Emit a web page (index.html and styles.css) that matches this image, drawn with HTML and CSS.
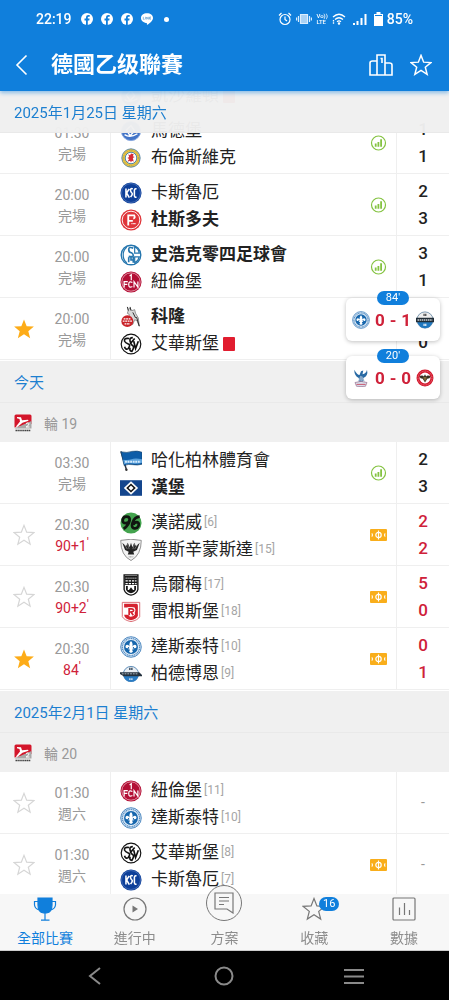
FILE: index.html
```html
<!DOCTYPE html>
<html lang="zh-Hant">
<head>
<meta charset="utf-8">
<meta name="viewport" content="width=device-width, initial-scale=1">
<title>德國乙级聯賽</title>
<link rel="stylesheet" href="styles.css">
</head>
<body>
<svg class="sprite" aria-hidden="true">
  <symbol id="star" viewBox="0 0 24 24"><path d="M12 1.5l2.900 7.400 7.900.5-6.100 5 2 7.700L12 17.800l-6.700 4.300 2-7.700-6.100-5 7.900-.5z"/></symbol>
  <symbol id="stats" viewBox="0 0 16 16"><circle cx="8" cy="8" r="7" fill="none" stroke="#84c341" stroke-width="1.200"/><path d="M4.300 8.500h1.800v3.300H4.300zM7 7h1.800v4.800H7zM9.700 4.300h1.800v7.500H9.700z" fill="#84c341"/></symbol>
  <symbol id="pitch" viewBox="0 0 17 12"><rect width="17" height="12" rx="1" fill="#f9ae1b"/><path d="M8.500 1.500v9M1.800 4.300Q3.300 6 1.800 7.700M15.200 4.300Q13.700 6 15.200 7.700" fill="none" stroke="#fff" stroke-width="1.100"/><ellipse cx="8.500" cy="6" rx="2.700" ry="2.700" fill="none" stroke="#fff" stroke-width="1.200"/></symbol>
  <symbol id="fb" viewBox="0 0 12 12"><circle cx="6" cy="6" r="6" fill="#fff"/><path d="M5 12V7.400H3.500V5.600H5V4.500c0-1.700 1-2.500 2.500-2.500l1.200.1v1.600H7.800c-.8 0-1 .4-1 1v.9h1.800l-.3 1.800H6.800V12z" fill="#107fdc"/></symbol>
  <symbol id="league" viewBox="0 0 18 18"><path d="M2 .5h14q1.500 0 1.500 1.500v8L.5 13.500V2Q.5.500 2 .5z" fill="#d3162b"/><path d="M.5 14.500L17.500 7v7.500z" fill="#a9a9a9"/><path d="M3 3l4 .3 1 3 6-.6.500 1-6 2-5.500 4.500-1-.7L6 7.500 5.500 5 3 4.300z" fill="#fff"/><path d="M12 9.500q3-1.500 3 .3T12 13h3.500" fill="none" stroke="#fff"/><path d="M1.500 16.500h15" stroke="#444" stroke-width="1.500" stroke-dasharray="1.500 .4"/></symbol>
  <symbol id="fcm" viewBox="0 0 24 24"><circle cx="12" cy="12" r="10.500" fill="#4274c7" stroke="#89a8df"/><path d="M5 16q6 4 14-1M7 11l5-5 4 6-5 5z" fill="none" stroke="#fff" stroke-width="1.500"/></symbol>
  <symbol id="ebs" viewBox="0 0 24 24"><circle cx="12" cy="12" r="10" fill="#edc440" stroke="#5484a8"/><circle cx="12" cy="12" r="8.200" fill="none" stroke="#7d8f60" stroke-width=".7" stroke-dasharray="1 1"/><circle cx="12" cy="12" r="6.300" fill="#fff" stroke="#397db2"/><path d="M9 8l2 1 1-2 3 1-1 2 2 1-2 1 1 4-2-1-1 2-1-2-3 1 2-3-2-1 2-1z" fill="#d72a34"/></symbol>
  <symbol id="ksc" viewBox="0 0 24 24"><circle cx="12" cy="12" r="11.500" fill="#0d3f99"/><circle cx="12" cy="12" r="10.300" fill="none" stroke="#7d9bd2" stroke-width=".5"/><path d="M6.500 7v10M10 7.500L7.200 12l3 5M14 7.500q-3-1-2.500 2 .2 1.500 1.500 2.500t-1.500 4.500M18 7.500q-2-.5-2.300 1.500v6q.2 2 2.300 1.500" stroke="#fff" stroke-width="1.700" fill="none"/></symbol>
  <symbol id="f95" viewBox="0 0 24 24"><circle cx="12" cy="12" r="11.500" fill="#df353a"/><circle cx="12" cy="12" r="9.600" fill="none" stroke="#fff" stroke-width="1"/><path d="M9 18V7h6.500q1.500 3-1 3.500M9 13h5" stroke="#fff" stroke-width="2" fill="none"/><path d="M12.500 16h5" stroke="#fff" stroke-width="1.500" stroke-dasharray="1 .5"/></symbol>
  <symbol id="s04" viewBox="0 0 24 24"><circle cx="12" cy="12" r="10.700" fill="#fff" stroke="#2576ae" stroke-width="1.500"/><path d="M7.500 3.500Q3.500 6 3.500 12t4 8.500M16 3q4.500 2.500 5 7h-5zM16 14h5q-1 4.500-5 6.500z" fill="none" stroke="#2576ae" stroke-width="1.300"/><path d="M14.500 4.500q-5-2-5 1.500t3 3.500q2 1 2 3t-5 1M9.500 14.500V20M12 14.500v3h3M14.500 14v6.500" fill="none" stroke="#2576ae" stroke-width="1.800"/></symbol>
  <symbol id="fcn" viewBox="0 0 24 24"><circle cx="12" cy="12" r="11.500" fill="#b30f35"/><circle cx="12" cy="12" r="10" fill="none" stroke="#efb9c5" stroke-width=".8"/><path d="M10.500 5.500L12.300 4v6M4.500 18v-6.500h4M4.500 14.500h3.500M13.500 12.500q-4-2-4 2.200t4 2.200M15.300 18v-6.500l4.200 6v-6" fill="none" stroke="#fff" stroke-width="1.300"/></symbol>
  <symbol id="koe" viewBox="0 0 24 24"><path d="M10 2l3 3 3-1 1 4 3 5 1 9-2.500-6-2.500-1-2 5-4 1V9L8 8z" fill="#d8d8d8" stroke="#666" stroke-width=".7"/><path d="M9 5l-1-4M12 5l-1-4M18 12l3 10M14 7l3 6" stroke="#222"/><circle cx="8" cy="16.500" r="6.500" fill="#c92329"/><path d="M3 16.500h10M4 14h8M5 19.500h6" stroke="#fff" stroke-width="1.200" stroke-dasharray="2 .7"/></symbol>
  <symbol id="elv" viewBox="0 0 24 24"><circle cx="12" cy="12" r="10.700" fill="#fff" stroke="#111" stroke-width="1.300"/><path d="M10 6q-6-1-5 3 1 2 4 3t0 5q-3 2-4-2M14 5q-4 0-3 4t3 5-1 6q-3 0-2-4M11 12l5-6M15 9l2 8 3-8" fill="none" stroke="#111" stroke-width="1.800"/></symbol>
  <symbol id="bsc" viewBox="0 0 24 24"><path d="M1 1.500l6 20" stroke="#2d3746" stroke-width="1.600"/><path d="M1 2q7 1.500 12-.5 6-1 11 1v13q-5 1.500-10 .5t-9.500 1z" fill="#0e5da8" stroke="#17436b" stroke-width=".7"/><path d="M3.500 10.500q5 1 9-.5t11.500 0v4q-5 1.500-10 .7t-9.500.8z" fill="#5ba2dd"/><path d="M5.500 12.800h17" stroke="#d8ecfb" stroke-width="2" stroke-dasharray="2 .8"/><circle cx="7" cy="21.500" r="1.300" fill="#333"/></symbol>
  <symbol id="hsv" viewBox="0 0 24 24"><path d="M0 3.500h24v17H0z" fill="#14468d"/><path d="M12 4.700l7.800 7.300-7.800 7.300L4.200 12z" fill="#fff"/><path d="M12 7.200l5.200 4.800-5.200 4.800L6.800 12z" fill="#111"/><path d="M12 9.400l2.800 2.600-2.800 2.600L9.200 12z" fill="#fff"/></symbol>
  <symbol id="h96" viewBox="0 0 24 24"><circle cx="12" cy="12" r="11.500" fill="#43a34e"/><path d="M10.500 8.200q0 4-4.300 4-3.500 0-3.200-3.700Q3.500 5 7 5q4 0 3.500 4-.7 5-6.500 9.500M21.500 5Q16 5.500 14 11q-2 5 .5 6.500 3.500 1.500 5.500-2 1.500-4-1.500-4.500-3 0-4 3" fill="none" stroke="#101510" stroke-width="3"/></symbol>
  <symbol id="scp" viewBox="0 0 24 24"><path d="M.8 1.500q11-2.500 22.400 0 0 16-11.200 22Q.8 18 .8 1.500z" fill="#f4f4f4" stroke="#888"/><path d="M2.500 4l3 8 4 2-1 3h7l-1-3 4-2 3-8-4 4-2-4-2 5-1.500-5-1.500 5-2-5-2 4z" fill="#252525"/><path d="M5 6l3 5M8 5l2 6M19 6l-3 5M16 5l-2 6" stroke="#aaa" stroke-width=".6"/><path d="M9.500 19.500h5" stroke="#888" stroke-dasharray="1 .5"/></symbol>
  <symbol id="ulm" viewBox="0 0 24 24"><path d="M4.500 1h15v16q-1.500 5-7.500 6-6-1-7.500-6z" fill="#fff" stroke="#171717" stroke-width="1.500"/><path d="M5 2h14v10H5z" fill="#171717"/><path d="M6 4.500h12" stroke="#ddd" stroke-dasharray="1.500 .6"/><path d="M6 7.500h12M6 10.500h12" stroke="#fff" stroke-width="1.300" stroke-dasharray="2.500 1"/><path d="M6.500 13v4q1.500 3.500 5.500 4 4-.5 5.500-4v-4h-2v4.500h-1.300l-2.200-3-2.200 3H8.500V13z" fill="#171717"/></symbol>
  <symbol id="ssv" viewBox="0 0 24 24"><path d="M2.500 1.500h19V17q-2 4-9.500 5.500Q4.500 21 2.500 17z" fill="#fff" stroke="#d9646c"/><path d="M4.500 3h13.500q1.500 0 1.500 2v11q-1 3.500-7.500 5-7-1.500-7.500-6H9q1 2.500 3 2.200 4-.7 4-3V7H4.500z" fill="#d5222f"/><path d="M10 15V8.500h2.500q3 .2 2.500 2-.5 1.500-4 1.500M12 12l3 3.500" fill="none" stroke="#fff" stroke-width="3.600"/><path d="M10 15.500V8.500h2.500q2.500.2 2.300 2-.3 1.500-4 1.500M12 12l2.500 3.500" fill="none" stroke="#d5222f" stroke-width="1.900"/></symbol>
  <symbol id="d98" viewBox="0 0 24 24"><circle cx="12" cy="12" r="11.200" fill="#e5eff8" stroke="#3f7fbb"/><circle cx="12" cy="12" r="9.400" fill="none" stroke="#5a91c5" stroke-width="1.500" stroke-dasharray="1.400 .6"/><circle cx="12" cy="12" r="7.600" fill="#1767ad"/><path d="M12 5.500c2.200 2.300 2.200 4.500.9 7 .9-2.600 3.800-4 4.900-2 .9 2-.8 3.300-2.500 2.600.4-1.500-1.300-1.200-1.500.4h1v1.200h-1.700l1 2.500L12 18.500l-2.100-1.300 1-2.500H9.200v-1.200h1c-.2-1.600-1.900-1.900-1.500-.4-1.700.7-3.400-.6-2.500-2.600 1.100-2 4-.6 4.900 2-1.300-2.500-1.300-4.700.9-7z" fill="#fff"/></symbol>
  <symbol id="p07" viewBox="0 0 24 24"><circle cx="12" cy="12" r="8.300" fill="#e9eef3" stroke="#5587b3"/><path d="M3.700 13.500h16.600q-1.500 7-8.300 7t-8.300-7z" fill="#2a7cc4"/><path d="M0 10h21l3 3v1.500H4L0 12z" fill="#24313e"/><path d="M2 11.800h17" stroke="#b5bcc4" stroke-dasharray="2 1"/><path d="M10 6.500h4" stroke="#345" stroke-width="2.500" stroke-dasharray="1.500 .7"/><path d="M10 17.500h4" stroke="#cfe3f5" stroke-width="2" stroke-dasharray="1.500 .7"/></symbol>
  <symbol id="p07-wide" viewBox="0 0 24 24"><circle cx="12" cy="12" r="10.800" fill="#eee" stroke="#557b9b"/><path d="M1.500 14h21Q20 23 12 23T1.500 14z" fill="#2078bf"/><path d="M0 9h24v6H0z" fill="#202d37"/><path d="M2 12h20" stroke="#c9ced2" stroke-width="2" stroke-dasharray="2 .8"/><path d="M10 5h4" stroke="#333" stroke-width="3" stroke-dasharray="1.500 .8"/><path d="M10 18.500h4" stroke="#fff" stroke-width="3" stroke-dasharray="1.500 .8"/></symbol>
  <symbol id="cpfc" viewBox="0 0 24 24"><path d="M3 1q4 7 7 7l2-5 3-1-1 5q5-1 6-6 2 8-5 11l-1 6h-4l-1-6Q3 9 3 1z" fill="#286aa4"/><path d="M11 9l3 1 3 7-3-2-2 3-1-3-3 2z" fill="#89a9c8"/><path d="M4 18q8-3 16 0l-2 5q-6 1-12 0z" fill="#d9dfeb" stroke="#8a5a7d" stroke-width=".8"/><path d="M6 20.500h12" stroke="#c62844"/></symbol>
  <symbol id="bre" viewBox="0 0 24 24"><circle cx="12" cy="12" r="11.300" fill="#d3162b"/><circle cx="12" cy="12" r="9.300" fill="none" stroke="#f2a5ac" stroke-width=".8" stroke-dasharray="1.500 .8"/><circle cx="12" cy="12" r="7.300" fill="#fff"/><path d="M4.500 10q4-3 6 0L12 7l1.500 3q2-3 6 0-1 3-4.500 3l-3 5-3-5q-3.500 0-4.500-3z" fill="#373021"/><path d="M10 12h4M11 14.500h2" stroke="#d8ae55" stroke-width="1.200"/></symbol>
</svg>

<header class="top">
  <div class="status">
    <span>22:19</span>
    <span class="status-apps">
      <svg class="app"><use href="#fb"/></svg>
      <svg class="app"><use href="#fb"/></svg>
      <svg class="app"><use href="#fb"/></svg>
      <svg class="app" viewBox="0 0 12 12"><path d="M6 .3c3.400 0 6 2 6 4.700 0 2.800-3.500 5.400-5.600 6.800-.6.300-.6-.5-.5-1.700C2.600 9.900 0 7.700 0 5 0 2.300 2.600.3 6 .3z" fill="#fff"/><path d="M2.300 3.800v2.500h1.300M4.600 3.800v2.500M5.700 6.500V4l1.600 2.300V3.800M10 4H8.600v2.200H10M8.600 5.100h1.200" fill="none" stroke="#4a90c8" stroke-width=".6"/></svg>
      <i class="dot"></i>
    </span>
    <span class="status-system">
      <svg width="14" height="14" viewBox="0 0 14 14" fill="none" stroke="#fff" stroke-width="1.200"><circle cx="7" cy="7.500" r="5"/><path d="M7 4.500v3l2 1.500M1 3.500L3.500 1M13 3.500L10.500 1"/></svg>
      <svg width="16" height="12" viewBox="0 0 16 12" fill="none" stroke="#d9edff" stroke-width="1.200"><path d="M4.500 1.500h7v9h-7z" fill="#a9d1f4"/><path d="M2.500 3v6M13.500 3v6M.6 4.500v3M15.400 4.500v3"/></svg>
      <span class="volte"><span>Vo))</span><span>LTE</span></span>
      <svg width="14" height="12" viewBox="0 0 14 12" fill="none" stroke="#fff" stroke-width="1.300"><path d="M1 4q6-5.500 12 0M3 6.500q4-3.500 8 0M5 8.700q2-1.500 4 0"/><circle cx="7" cy="10.500" r=".6" fill="#fff"/><path d="M1.500 7v4" stroke-dasharray="1.500 .8"/></svg>
      <svg class="signal" width="14" height="12" viewBox="0 0 14 12" fill="none" stroke="#fff" stroke-width="2"><path d="M1 10v2M4.500 8v4M8.500 5v7M12.500 1v11"/></svg>
      <svg width="9" height="14" viewBox="0 0 9 14"><path d="M2.500 0h4v2H9v12H0V2h2.500z" fill="#fff"/><path d="M1 3.500h7" stroke="#107fdc" stroke-width="1"/></svg>
      <span>85%</span>
    </span>
  </div>
  <div class="title-bar">
    <button class="bar-btn" aria-label="返回"><svg width="22" height="22" viewBox="0 0 22 22"><path d="M14.500 1.500L5 11l9.500 9.500"/></svg></button>
    <h1>德國乙级聯賽</h1>
    <button class="bar-btn" aria-label="積分榜"><svg width="24" height="22" viewBox="0 0 24 22"><path d="M8 21V1h8v20M8 7H3.500Q1 7 1 9v12h22V11q0-2-2.500-2H16M11.500 4.500H13V9"/></svg></button>
    <button class="bar-btn" aria-label="收藏聯賽"><svg width="22" height="22" viewBox="0 0 24 24"><use href="#star"/></svg></button>
  </div>
</header>

<main class="schedule">
  <h2 class="date date-pinned">2025年1月25日 星期六</h2>
  <ul class="matches matches-scrolled">
    <li class="match">
      <span class="fav"></span>
      <div class="time"></div>
      <div class="teams"><p class="team"></p><p class="team"><svg><use href="#fcm"/></svg>凱沙羅頓<i class="red-card"></i></p></div>
      <div class="score"></div>
    </li>
    <li class="match">
      <span class="fav"></span>
      <div class="time"><span>01:30</span><span>完場</span></div>
      <div class="teams"><p class="team"><svg><use href="#fcm"/></svg>馬德堡</p><p class="team"><svg><use href="#ebs"/></svg>布倫斯維克</p><svg class="mark"><use href="#stats"/></svg></div>
      <div class="score"><span>1</span><span>1</span></div>
    </li>
    <li class="match">
      <span class="fav"></span>
      <div class="time"><span>20:00</span><span>完場</span></div>
      <div class="teams"><p class="team"><svg><use href="#ksc"/></svg>卡斯魯厄</p><p class="team winner"><svg><use href="#f95"/></svg>杜斯多夫</p><svg class="mark"><use href="#stats"/></svg></div>
      <div class="score"><span>2</span><span>3</span></div>
    </li>
    <li class="match">
      <span class="fav"></span>
      <div class="time"><span>20:00</span><span>完場</span></div>
      <div class="teams"><p class="team winner"><svg><use href="#s04"/></svg>史浩克零四足球會</p><p class="team"><svg><use href="#fcn"/></svg>紐倫堡</p><svg class="mark"><use href="#stats"/></svg></div>
      <div class="score"><span>3</span><span>1</span></div>
    </li>
    <li class="match">
      <button class="fav on" aria-label="取消收藏"><svg><use href="#star"/></svg></button>
      <div class="time"><span>20:00</span><span>完場</span></div>
      <div class="teams"><p class="team winner"><svg><use href="#koe"/></svg>科隆</p><p class="team"><svg><use href="#elv"/></svg>艾華斯堡<i class="red-card"></i></p></div>
      <div class="score"><span></span><span>0</span></div>
    </li>
  </ul>

  <h2 class="date">今天</h2>
  <h3 class="round"><svg><use href="#league"/></svg>輪 19</h3>
  <ul class="matches">
    <li class="match">
      <span class="fav"></span>
      <div class="time"><span>03:30</span><span>完場</span></div>
      <div class="teams"><p class="team"><svg><use href="#bsc"/></svg>哈化柏林體育會</p><p class="team winner"><svg><use href="#hsv"/></svg>漢堡</p><svg class="mark"><use href="#stats"/></svg></div>
      <div class="score"><span>2</span><span>3</span></div>
    </li>
    <li class="match live">
      <button class="fav" aria-label="收藏"><svg><use href="#star"/></svg></button>
      <div class="time"><span>20:30</span><span>90+1<sup>'</sup></span></div>
      <div class="teams"><p class="team"><svg><use href="#h96"/></svg>漢諾威<small>[6]</small></p><p class="team"><svg><use href="#scp"/></svg>普斯辛蒙斯達<small>[15]</small></p><svg class="mark"><use href="#pitch"/></svg></div>
      <div class="score"><span>2</span><span>2</span></div>
    </li>
    <li class="match live">
      <button class="fav" aria-label="收藏"><svg><use href="#star"/></svg></button>
      <div class="time"><span>20:30</span><span>90+2<sup>'</sup></span></div>
      <div class="teams"><p class="team"><svg><use href="#ulm"/></svg>烏爾梅<small>[17]</small></p><p class="team"><svg><use href="#ssv"/></svg>雷根斯堡<small>[18]</small></p><svg class="mark"><use href="#pitch"/></svg></div>
      <div class="score"><span>5</span><span>0</span></div>
    </li>
    <li class="match live">
      <button class="fav on" aria-label="取消收藏"><svg><use href="#star"/></svg></button>
      <div class="time"><span>20:30</span><span>84<sup>'</sup></span></div>
      <div class="teams"><p class="team"><svg><use href="#d98"/></svg>達斯泰特<small>[10]</small></p><p class="team"><svg><use href="#p07"/></svg>柏德博恩<small>[9]</small></p><svg class="mark"><use href="#pitch"/></svg></div>
      <div class="score"><span>0</span><span>1</span></div>
    </li>
  </ul>

  <h2 class="date">2025年2月1日 星期六</h2>
  <h3 class="round"><svg><use href="#league"/></svg>輪 20</h3>
  <ul class="matches">
    <li class="match">
      <button class="fav" aria-label="收藏"><svg><use href="#star"/></svg></button>
      <div class="time"><span>01:30</span><span>週六</span></div>
      <div class="teams"><p class="team"><svg><use href="#fcn"/></svg>紐倫堡<small>[11]</small></p><p class="team"><svg><use href="#d98"/></svg>達斯泰特<small>[10]</small></p></div>
      <div class="score pending">-</div>
    </li>
    <li class="match">
      <button class="fav" aria-label="收藏"><svg><use href="#star"/></svg></button>
      <div class="time"><span>01:30</span><span>週六</span></div>
      <div class="teams"><p class="team"><svg><use href="#elv"/></svg>艾華斯堡<small>[8]</small></p><p class="team"><svg><use href="#ksc"/></svg>卡斯魯厄<small>[7]</small></p><svg class="mark"><use href="#pitch"/></svg></div>
      <div class="score pending">-</div>
    </li>
  </ul>

  <aside class="floats">
    <a class="float" href="#m1"><span class="minute">84'</span><svg><use href="#d98"/></svg><b>0</b><b>-</b><b>1</b><svg><use href="#p07-wide"/></svg></a>
    <a class="float" href="#m2"><span class="minute">20'</span><svg><use href="#cpfc"/></svg><b>0</b><b>-</b><b>0</b><svg><use href="#bre"/></svg></a>
  </aside>
</main>

<nav class="tabs">
  <a class="tab active" href="#all"><svg width="24" height="24" viewBox="0 0 24 24"><path d="M5 1h14v7q0 7-5.500 8h-3Q5 15 5 8z" fill="#107fdc"/><path d="M5 4.500H1.500V8Q2 12 6.500 13M19 4.500h3.500V8Q22 12 17.500 13M12 16v7M8 23.200h8.500"/></svg>全部比賽</a>
  <a class="tab" href="#live"><svg width="24" height="24" viewBox="0 0 24 24"><circle cx="12" cy="12" r="11"/><path d="M9.500 8.500l5.500 3.500-5.500 3.500z" fill="#777" stroke="none"/></svg>進行中</a>
  <a class="tab" href="#tips"><span class="raised-ring"><svg width="20" height="22" viewBox="0 0 20 22"><path d="M1 1h18v20l-6-4H1zM5 5.500h10M5 9h10M5 12.500h5" /></svg></span>方案</a>
  <a class="tab" href="#favs"><svg width="24" height="24" viewBox="0 0 24 24"><use href="#star"/></svg><span class="badge">16</span>收藏</a>
  <a class="tab" href="#data"><svg width="24" height="24" viewBox="0 0 24 24"><rect x="1" y="1" width="22" height="22" rx="1"/><path d="M7.500 10.500V18M12.500 6v12M17.500 13v5"/></svg>數據</a>
</nav>

<div class="system-nav">
  <button aria-label="上一頁"><svg width="20" height="20" viewBox="0 0 20 20"><path d="M15 2L5 10l10 8"/></svg></button>
  <button aria-label="主畫面"><svg width="20" height="20" viewBox="0 0 20 20"><circle cx="10" cy="10" r="8.500"/></svg></button>
  <button aria-label="最近使用"><svg width="20" height="20" viewBox="0 0 20 20"><path d="M0 4h20M0 10.500h20M0 17h20"/></svg></button>
</div>
</body>
</html>
```

FILE: styles.css
```css
* { box-sizing: border-box; }

body {
  margin: 0;
  height: 100vh;
  display: flex;
  flex-direction: column;
  overflow: hidden;
  background: #fff;
  color: #222;
  font-family: Roboto, "Noto Sans CJK TC", sans-serif;
  font-size: 14px;
}

h1, h2, h3, p, ul { margin: 0; padding: 0; font-weight: 400; }
ul { list-style: none; }
svg { display: block; flex: none; }
a { color: inherit; text-decoration: none; }
button { padding: 0; border: 0; background: none; font: inherit; color: inherit; }
.sprite { position: absolute; width: 0; height: 0; }

/* Header */
.top {
  position: relative;
  z-index: 3;
  flex: none;
  background: #107fdc;
  color: #fff;
  box-shadow: 0 2px 4px rgba(16, 127, 220, .45);
}
.status {
  display: flex;
  align-items: center;
  height: 38px;
  padding: 0 36px;
  font-weight: 500;
}
.status-apps { display: flex; align-items: center; gap: 8px; margin-left: 9px; }
.app { width: 12px; height: 12px; }
.dot { width: 5px; height: 5px; margin-left: 3px; border-radius: 50%; background: #fff; }
.status-system { display: flex; align-items: center; gap: 4px; margin-left: auto; }
.signal { margin: 0 3px; }
.volte { display: flex; flex-direction: column; font-size: 6px; line-height: 6px; }
.title-bar {
  display: flex;
  align-items: center;
  gap: 17px;
  height: 53px;
  padding: 0 17px 0 12px;
}
.title-bar h1 { flex: 1; font-size: 22px; line-height: 30px; font-weight: 700; }
.bar-btn svg { fill: none; stroke: #fff; stroke-width: 1.6; }

/* Schedule */
.schedule { position: relative; flex: 1; min-height: 0; overflow: hidden; }
.date {
  height: 42px;
  padding: 1px 14px 0;
  background: #f0f0f0;
  color: #1c7fd0;
  font-size: 15px;
  line-height: 43px;
  border-bottom: 1px solid #e9e9e9;
}
.date-pinned {
  position: sticky;
  top: 0;
  z-index: 1;
  background: rgba(240, 240, 240, .97);
}
.round {
  display: flex;
  align-items: center;
  gap: 12px;
  height: 39px;
  padding: 0 14px;
  background: #f0f0f0;
  color: #999;
  font-size: 14px;
}
.round svg { width: 18px; height: 18px; }
.matches { padding-bottom: 1px; }
/* The list has been scrolled under the pinned date. */
.matches-scrolled { margin-top: -83px; }
.match {
  display: grid;
  grid-template-columns: 48px 48px 14px 1fr 53px;
  height: 62px;
  border-bottom: 1px solid #efefef;
}
.fav { display: flex; align-items: center; justify-content: center; }
.fav svg { width: 22px; height: 22px; fill: none; stroke: #d6d6d6; stroke-width: 1.3; }
.fav.on svg { fill: #fdac18; stroke: none; }
.time {
  display: flex;
  flex-direction: column;
  align-items: center;
  padding-top: 11px;
  color: #999;
  line-height: 21px;
}
.time span { height: 21px; }
.time sup { font-size: 12px; line-height: 0; vertical-align: 4px; }
.live .time span:last-child { color: #cf2139; }
.teams {
  position: relative;
  grid-column: 4;
  padding: 5px 40px 0 9px;
  border-left: 1px solid #efefef;
}
.team {
  display: flex;
  align-items: center;
  height: 27px;
  font-size: 17px;
  line-height: 27px;
  white-space: nowrap;
}
.team svg { width: 22px; height: 22px; margin-right: 9px; }
.winner { font-weight: 700; }
.team small { margin-left: 2px; color: #a5a5a5; font-size: 12px; }
.red-card { width: 12px; height: 14px; margin-left: 4px; border-radius: 1px; background: #e11d2f; }
.mark { position: absolute; right: 9px; top: 23px; width: 17px; height: 16px; }
.score {
  display: flex;
  flex-direction: column;
  align-items: center;
  padding-top: 4px;
  border-left: 1px solid #efefef;
  font-size: 17px;
  font-weight: 500;
  line-height: 27px;
}
.score span { height: 27px; }
.live .score { color: #cf2139; }
.score.pending { justify-content: center; padding: 0; color: #999; font-size: 14px; font-weight: 400; }

/* Live score cards floating over the list */
.floats {
  position: absolute;
  top: 207px;
  right: 9px;
  z-index: 2;
  display: grid;
  gap: 15px;
}
.float {
  position: relative;
  display: flex;
  align-items: center;
  justify-content: space-between;
  width: 94px;
  height: 43px;
  padding: 0 6px;
  border-radius: 6px;
  background: #fff;
  box-shadow: 0 1px 4px rgba(0, 0, 0, .25);
  color: #cf2139;
  font-size: 17px;
}
.float b { font-weight: 700; }
.float svg { width: 18px; height: 18px; }
.minute {
  position: absolute;
  top: -7px;
  left: 31px;
  width: 32px;
  border-radius: 7px;
  background: #107fdc;
  color: #fff;
  font-size: 11px;
  line-height: 14px;
  text-align: center;
}

/* Bottom tabs */
.tabs {
  position: relative;
  z-index: 3;
  flex: none;
  display: grid;
  grid-template-columns: repeat(5, 1fr);
  grid-template-rows: 100%;
  height: 57px;
  background: #f7f7f7;
  border-bottom: 1px solid #ccc;
}
.tab {
  position: relative;
  display: flex;
  flex-direction: column;
  align-items: center;
  justify-content: flex-end;
  gap: 7px;
  padding-bottom: 2px;
  color: #8c8c8c;
  line-height: 20px;
}
.tab svg { fill: none; stroke: #777; stroke-width: 1.2; }
.tab.active { color: #107fdc; }
.tab.active svg { stroke: #107fdc; }
.raised-ring {
  display: grid;
  flex: none;
  place-items: center;
  width: 36px;
  height: 36px;
  border: 1px solid #777;
  border-radius: 50%;
  background: #f7f7f7;
}
.badge {
  position: absolute;
  top: 3px;
  left: 50%;
  width: 20px;
  margin-left: 5px;
  border-radius: 7px;
  background: #107fdc;
  color: #fff;
  font-size: 11px;
  line-height: 14px;
  text-align: center;
}

/* Device navigation */
.system-nav {
  flex: none;
  display: grid;
  grid-template-columns: repeat(3, 1fr);
  height: 49px;
  padding: 0 30px;
  background: #000;
}
.system-nav button { display: grid; place-items: center; }
.system-nav svg { fill: none; stroke: #8a8a8a; stroke-width: 2; }
```
